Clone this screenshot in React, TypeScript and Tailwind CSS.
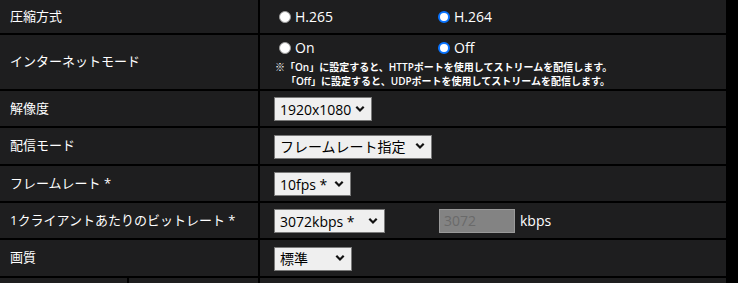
import React from 'react';

const Chevron = () => (
  <svg
    width="10"
    height="7"
    viewBox="0 0 10 7"
    className="pointer-events-none absolute right-[7px] top-1/2 -translate-y-1/2"
  >
    <path d="M1.3 1.3 L5 5 L8.7 1.3" fill="none" stroke="#111" strokeWidth="2.2" />
  </svg>
);

const Select = ({ value, options, className }: { value: string; options: string[]; className: string }) => (
  <div className={`relative h-[24px] ${className}`}>
    <select
      defaultValue={value}
      className="h-full w-full appearance-none border border-[#7a7a7a] bg-[#efefef] pl-[5px] text-[14px] text-black outline-none"
    >
      {options.map((o) => (
        <option key={o}>{o}</option>
      ))}
    </select>
    <Chevron />
  </div>
);

const Radio = ({ name, label, checked }: { name: string; label: string; checked?: boolean }) => (
  <label className="flex w-[159px] items-center gap-[4px]">
    <input
      type="radio"
      name={name}
      defaultChecked={checked}
      className="h-[12px] w-[12px] appearance-none rounded-full border border-[#9a9a9a] bg-white checked:border-2 checked:border-[#0a74ff]"
    />
    <span className="text-[14px] leading-[14px]">{label}</span>
  </label>
);

const Label = ({ children }: { children: React.ReactNode }) => (
  <div className="flex items-center bg-[#1e1e1f] pl-[10px] text-[13px]">{children}</div>
);

export default function App() {
  return (
    <div className="h-[283px] w-full overflow-hidden bg-black font-['Open_Sans','Noto_Sans_CJK_JP',sans-serif] text-white">
      <div className="grid w-[726px] grid-cols-[258px_466px] grid-rows-[33px_54px_35px_36px_35px_35px_36px_20px] gap-[2px] bg-black">
        <Label>圧縮方式</Label>
        <div className="flex items-center bg-[#1e1e1f] pl-[19px]">
          <Radio name="codec" label="H.265" />
          <Radio name="codec" label="H.264" checked />
        </div>

        <Label>インターネットモード</Label>
        <div className="flex flex-col bg-[#1e1e1f] pt-[6px]">
          <div className="flex items-center pl-[19px]">
            <Radio name="inet" label="On" />
            <Radio name="inet" label="Off" checked />
          </div>
          <div className="mt-[5px] pl-[15px] text-[10px] font-semibold leading-[14px]">
            <p>※「On」に設定すると、HTTPポートを使用してストリームを配信します。</p>
            <p className="pl-[11px]">「Off」に設定すると、UDPポートを使用してストリームを配信します。</p>
          </div>
        </div>

        <Label>解像度</Label>
        <div className="flex items-center bg-[#1e1e1f] pl-[14px]">
          <Select value="1920x1080" options={['1920x1080', '1280x720', '640x360']} className="w-[98px]" />
        </div>

        <Label>配信モード</Label>
        <div className="flex items-center bg-[#1e1e1f] pl-[14px]">
          <Select value="フレームレート指定" options={['フレームレート指定', '固定ビットレート']} className="w-[158px]" />
        </div>

        <Label>フレームレート *</Label>
        <div className="flex items-center bg-[#1e1e1f] pl-[14px]">
          <Select value="10fps *" options={['30fps', '15fps *', '10fps *', '5fps *']} className="w-[77px]" />
        </div>

        <Label>1クライアントあたりのビットレート *</Label>
        <div className="flex items-center bg-[#1e1e1f] pl-[14px]">
          <Select value="3072kbps *" options={['2048kbps *', '3072kbps *', '4096kbps *']} className="w-[111px]" />
          <input
            disabled
            defaultValue="3072"
            className="ml-[54px] h-[24px] w-[76px] border border-[#9a9a9a] bg-[#838383] pl-[4px] text-[14px] text-[#6a6a6a]"
          />
          <span className="ml-[5px] text-[14px]">kbps</span>
        </div>

        <Label>画質</Label>
        <div className="flex items-center bg-[#1e1e1f] pl-[14px]">
          <Select value="標準" options={['標準', '高画質', '低画質']} className="w-[78px]" />
        </div>

        <div className="grid grid-cols-[127px_129px] gap-[2px] bg-black">
          <div className="bg-[#1e1e1f]" />
          <div className="bg-[#1e1e1f]" />
        </div>
        <div className="bg-[#1e1e1f]" />
      </div>
    </div>
  );
}
